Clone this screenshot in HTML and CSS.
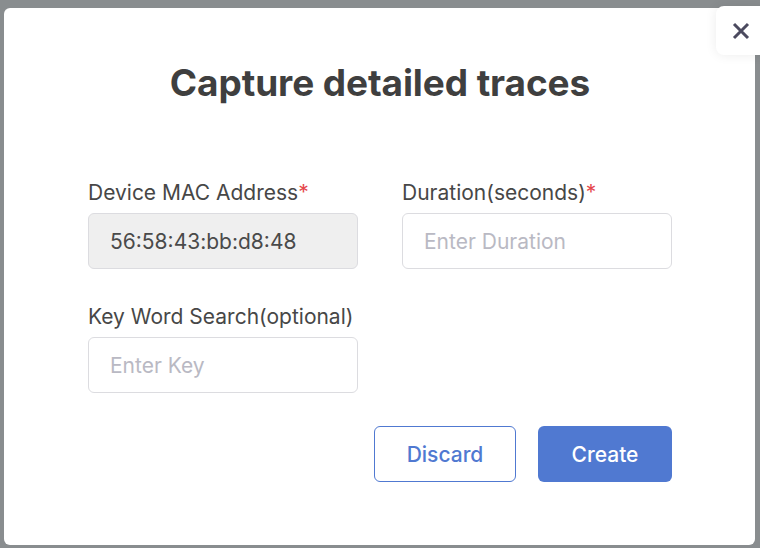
FILE: index.html
```html
<!DOCTYPE html>
<html>
<head>
<meta charset="utf-8">
<link rel="stylesheet" href="styles.css">
</head>
<body>
<div class="modal">
  <h1 class="title">Capture detailed traces</h1>
  <div class="grid">
    <div class="field">
      <label class="label">Device MAC Address<span class="req">*</span></label>
      <div class="input disabled">56:58:43:bb:d8:48</div>
    </div>
    <div class="field">
      <label class="label">Duration(seconds)<span class="req">*</span></label>
      <div class="input placeholder">Enter Duration</div>
    </div>
    <div class="field">
      <label class="label">Key Word Search(optional)</label>
      <div class="input placeholder">Enter Key</div>
    </div>
  </div>
  <div class="actions">
    <button class="btn btn-outline">Discard</button>
    <button class="btn btn-primary">Create</button>
  </div>
</div>
<button class="close" aria-label="Close">
  <svg width="18" height="18" viewBox="0 0 18 18"><path d="M2 2 L16 16 M16 2 L2 16" stroke="#4b4a5f" stroke-width="3" stroke-linecap="butt"/></svg>
</button>
</body>
</html>
```
FILE: styles.css
```css
html, body {
  margin: 0;
  padding: 0;
}
body {
  width: 760px;
  height: 548px;
  background: #898d8f;
  font-family: Inter, "Open Sans", sans-serif;
  position: relative;
  overflow: hidden;
}
.modal {
  margin: 8px 5px 0 4px;
  height: 537px;
  box-sizing: border-box;
  background: #fff;
  border-radius: 6px;
  padding: 55px 83px 0 84px;
  display: flex;
  flex-direction: column;
}
.title {
  margin: 0;
  text-align: center;
  font-size: 37px;
  font-weight: 700;
  color: #3f3f3f;
  letter-spacing: -0.1px;
  line-height: 40px;
}
.grid {
  margin-top: 78px;
  display: grid;
  grid-template-columns: 270px 270px;
  column-gap: 44px;
  row-gap: 36px;
}
.field {
  display: flex;
  flex-direction: column;
  gap: 8px;
}
.label {
  font-size: 21px;
  color: #474747;
  line-height: 24px;
  white-space: nowrap;
}
.req {
  color: #e5484d;
}
.input {
  height: 56px;
  box-sizing: border-box;
  border: 1px solid #dcdce0;
  border-radius: 6px;
  padding: 0 21px;
  display: flex;
  align-items: center;
  font-size: 21px;
}
.disabled {
  background: #efefef;
  color: #4a4a4a;
}
.placeholder {
  color: #b9b9c3;
}
.actions {
  margin-top: 33px;
  display: flex;
  justify-content: flex-end;
  gap: 22px;
}
.btn {
  height: 56px;
  box-sizing: border-box;
  border-radius: 6px;
  font-family: Inter, "Open Sans", sans-serif;
  font-size: 21px;
  font-weight: 500;
}
.btn-outline {
  width: 142px;
  background: #fff;
  border: 1px solid #5079d1;
  color: #5079d1;
}
.btn-primary {
  width: 134px;
  background: #5079d1;
  border: none;
  color: #fff;
}
.close {
  position: absolute;
  top: 6px;
  right: -8px;
  width: 52px;
  height: 49px;
  background: #fff;
  border: none;
  border-radius: 8px;
  box-shadow: 0 0 12px rgba(0,0,0,0.08);
  display: flex;
  align-items: center;
  padding: 0 0 0 16px;
}
```
